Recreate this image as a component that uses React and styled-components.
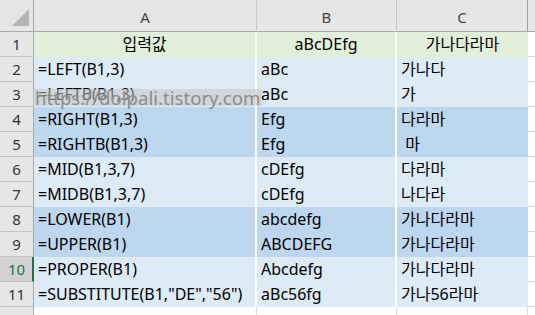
import React from "react";
import styled, { createGlobalStyle } from "styled-components";

const GlobalStyle = createGlobalStyle`
  html, body {
    margin: 0;
    padding: 0;
    background: #ffffff;
  }
  body {
    font-family: "Noto Sans", "Noto Sans CJK KR", sans-serif;
  }
`;

const Page = styled.div`
  position: relative;
  width: 535px;
  height: 315px;
  overflow: hidden;
  background: #ffffff;
`;

const Sheet = styled.div`
  display: grid;
  grid-template-columns: 34px 223px 140px 131px 1fr;
  grid-template-rows: 32px repeat(12, 25px);
`;

const Corner = styled.div`
  box-sizing: border-box;
  background: #e6e6e6;
  border-right: 1px solid #a9a9a9;
  border-bottom: 1px solid #a9a9a9;
  display: flex;
  align-items: flex-end;
  justify-content: flex-end;
  padding: 0 3px 4px 0;
`;

const ColHead = styled.div`
  box-sizing: border-box;
  background: #e6e6e6;
  border-right: 1px solid ${(p) => (p.$last ? "#a0a0a0" : "#c8c8c8")};
  border-bottom: 1px solid #a9a9a9;
  display: flex;
  align-items: center;
  justify-content: center;
  padding-top: 2px;
  font-size: 15px;
  color: #444444;
`;

const ColHeadRest = styled.div`
  box-sizing: border-box;
  background: #e6e6e6;
  border-bottom: 1px solid #a9a9a9;
`;

const RowHead = styled.div`
  box-sizing: border-box;
  background: ${(p) => (p.$active ? "#d2d2d2" : "#e6e6e6")};
  border-right: ${(p) => (p.$active ? "2px solid #217346" : "1px solid #a9a9a9")};
  border-bottom: 1px solid #c4c4c4;
  display: flex;
  align-items: center;
  justify-content: center;
  font-size: 15px;
  color: ${(p) => (p.$active ? "#217346" : "#333333")};
  padding-left: ${(p) => (p.$active ? "1px" : "0")};
`;

const Cell = styled.div`
  box-sizing: border-box;
  background: ${(p) => p.$fill};
  border-right: ${(p) => (p.$gap ? "2px solid #ffffff" : "none")};
  font-size: 16px;
  line-height: 25px;
  color: #000000;
  padding: 0 4px;
  white-space: pre;
  text-align: ${(p) => p.$align || "left"};
  overflow: hidden;
`;

const Blank = styled.div`
  box-sizing: border-box;
  background: #ffffff;
  border-bottom: 1px solid #d9d9d9;
`;

const EmptyCell = styled.div`
  box-sizing: border-box;
  background: #ffffff;
  border-right: 1px solid #d9d9d9;
`;

const Watermark = styled.div`
  position: absolute;
  left: 33px;
  top: 89px;
  width: 229px;
  height: 17px;
  background: rgba(196, 196, 196, 0.55);
  color: #8c8c8c;
  font-family: "Noto Sans", sans-serif;
  font-size: 18.6px;
  line-height: 17px;
  padding-left: 2px;
  box-sizing: border-box;
  white-space: nowrap;
`;

const GREEN = "#e2efda";
const LIGHT = "#ddebf7";
const MID = "#bdd7ee";

const rows = [
  { a: "입력값", b: "aBcDEfg", c: "가나다라마", fill: GREEN, center: true },
  { a: "=LEFT(B1,3)", b: "aBc", c: "가나다", fill: LIGHT },
  { a: "=LEFTB(B1,3)", b: "aBc", c: "가", fill: LIGHT },
  { a: "=RIGHT(B1,3)", b: "Efg", c: "다라마", fill: MID },
  { a: "=RIGHTB(B1,3)", b: "Efg", c: " 마", fill: MID },
  { a: "=MID(B1,3,7)", b: "cDEfg", c: "다라마", fill: LIGHT },
  { a: "=MIDB(B1,3,7)", b: "cDEfg", c: "나다라", fill: LIGHT },
  { a: "=LOWER(B1)", b: "abcdefg", c: "가나다라마", fill: MID },
  { a: "=UPPER(B1)", b: "ABCDEFG", c: "가나다라마", fill: MID },
  { a: "=PROPER(B1)", b: "Abcdefg", c: "가나다라마", fill: LIGHT },
  { a: '=SUBSTITUTE(B1,"DE","56")', b: "aBc56fg", c: "가나56라마", fill: LIGHT },
];

const App = () => {
  return (
    <Page>
      <GlobalStyle />
      <Sheet>
        <Corner>
          <svg width="18" height="18" viewBox="0 0 18 18">
            <polygon points="17,0 17,17 0,17" fill="#b4b4b4" />
          </svg>
        </Corner>
        <ColHead>A</ColHead>
        <ColHead>B</ColHead>
        <ColHead $last>C</ColHead>
        <ColHeadRest />

        {rows.map((r, i) => (
          <React.Fragment key={i}>
            <RowHead $active={i === 9}>{i + 1}</RowHead>
            <Cell $fill={r.fill} $gap $align={r.center ? "center" : "left"}>
              {r.a}
            </Cell>
            <Cell $fill={r.fill} $gap $align={r.center ? "center" : "left"}>
              {r.b}
            </Cell>
            <Cell $fill={r.fill} $align={r.center ? "center" : "left"}>
              {r.c}
            </Cell>
            <Blank />
          </React.Fragment>
        ))}

        <RowHead />
        <EmptyCell />
        <EmptyCell />
        <EmptyCell />
        <Blank />
      </Sheet>
      <Watermark>https://dolpali.tistory.com</Watermark>
    </Page>
  );
};

export default App;
